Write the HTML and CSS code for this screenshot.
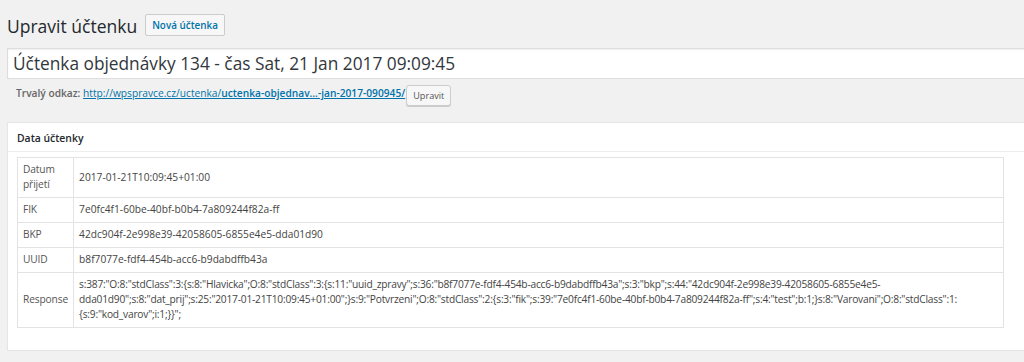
FILE: index.html
```html
<!DOCTYPE html>
<html lang="cs">
<head>
<meta charset="utf-8">
<title>Upravit účtenku</title>
<link rel="stylesheet" href="styles.css">
</head>
<body>
<div class="wrap">
  <div class="heading">
    <h1 class="page-title">Upravit účtenku</h1>
    <a class="add-new" href="#">Nová účtenka</a>
  </div>
  <div class="title-box">Účtenka objednávky 134 - čas Sat, 21 Jan 2017 09:09:45</div>
  <div class="permalink">
    <span class="perm-text"><strong class="perm-label">Trvalý odkaz:</strong> <a class="perm-link" href="#">http://wpspravce.cz/uctenka/<b>uctenka-objednav…-jan-2017-090945/</b></a></span>
    <button class="btn-small" type="button">Upravit</button>
  </div>
  <div class="postbox">
    <h2 class="postbox-title">Data účtenky</h2>
    <div class="inside">
      <table class="data">
        <tr><td class="lbl">Datum přijetí</td><td class="val">2017-01-21T10:09:45+01:00</td></tr>
        <tr><td class="lbl">FIK</td><td class="val">7e0fc4f1-60be-40bf-b0b4-7a809244f82a-ff</td></tr>
        <tr><td class="lbl">BKP</td><td class="val">42dc904f-2e998e39-42058605-6855e4e5-dda01d90</td></tr>
        <tr><td class="lbl">UUID</td><td class="val">b8f7077e-fdf4-454b-acc6-b9dabdffb43a</td></tr>
        <tr><td class="lbl">Response</td><td class="val val-raw">s:387:"O:8:"stdClass":3:{s:8:"Hlavicka";O:8:"stdClass":3:{s:11:"uuid_zpravy";s:36:"b8f7077e-fdf4-454b-acc6-b9dabdffb43a";s:3:"bkp";s:44:"42dc904f-2e998e39-42058605-6855e4e5-dda01d90";s:8:"dat_prij";s:25:"2017-01-21T10:09:45+01:00";}s:9:"Potvrzeni";O:8:"stdClass":2:{s:3:"fik";s:39:"7e0fc4f1-60be-40bf-b0b4-7a809244f82a-ff";s:4:"test";b:1;}s:8:"Varovani";O:8:"stdClass":1:{s:9:"kod_varov";i:1;}}";</td></tr>
      </table>
    </div>
  </div>
</div>
</body>
</html>
```
FILE: styles.css
```css
html, body {
  margin: 0;
  padding: 0;
  background: #f1f1f1;
  overflow: hidden;
}
body {
  font-family: "Open Sans", "Noto Sans", sans-serif;
  font-size: 10.2px;
  color: #444;
}
.wrap {
  padding: 0 0 0 7px;
  width: 1030px;
}
.heading {
  display: flex;
  align-items: flex-start;
  gap: 8px;
  padding-top: 14px;
}
.page-title {
  margin: 0;
  padding-top: 2px;
  font-size: 17.5px;
  font-weight: 400;
  line-height: 21px;
  color: #23282d;
}
.add-new {
  display: block;
  box-sizing: border-box;
  height: 22px;
  border: 1px solid #ccc;
  border-radius: 2px;
  background: #f7f7f7;
  color: #0073aa;
  font-weight: 600;
  font-size: 9.9px;
  text-decoration: none;
  padding: 0 6px;
  line-height: 20px;
}
.title-box {
  margin-top: 11px;
  height: 29px;
  border: 1px solid #ddd;
  background: #fff;
  box-shadow: inset 0 1px 2px rgba(0,0,0,.07);
  font-size: 17.3px;
  line-height: 29px;
  padding-left: 5px;
  color: #32373c;
}
.permalink {
  display: flex;
  align-items: flex-start;
  margin-top: 6px;
  padding-left: 9px;
  color: #666;
}
.perm-text {
  line-height: 16px;
}
.perm-label {
  font-weight: 600;
}
.perm-link {
  color: #0073aa;
  text-decoration: underline;
}
.perm-link b { font-weight: 600; }
.btn-small {
  margin-left: 1px;
  height: 21px;
  padding: 0 6px;
  border: 1px solid #ccc;
  border-radius: 3px;
  background: #f7f7f7;
  box-shadow: 0 1px 0 #ccc;
  color: #555;
  font-family: inherit;
  font-size: 9.1px;
}
.postbox {
  margin-top: 16px;
  background: #fff;
  border: 1px solid #e5e5e5;
  box-shadow: 0 1px 1px rgba(0,0,0,.04);
}
.postbox-title {
  margin: 0;
  font-size: 10.4px;
  font-weight: 600;
  line-height: 26px;
  padding: 2px 12px 0 9px;
  border-bottom: 1px solid #eee;
  color: #23282d;
}
.inside {
  padding: 5px 0 22px 9px;
}
.data {
  border-collapse: collapse;
  width: 987px;
}
.data td {
  border: 1px solid #e3e3e3;
  padding: 4px 5px 5px;
  line-height: 15px;
  vertical-align: middle;
}
.lbl {
  width: 42px;
  color: #555;
  letter-spacing: -0.12px;
}
.val {
  color: #444;
}
.val-raw {
  letter-spacing: -0.21px;
}
```
